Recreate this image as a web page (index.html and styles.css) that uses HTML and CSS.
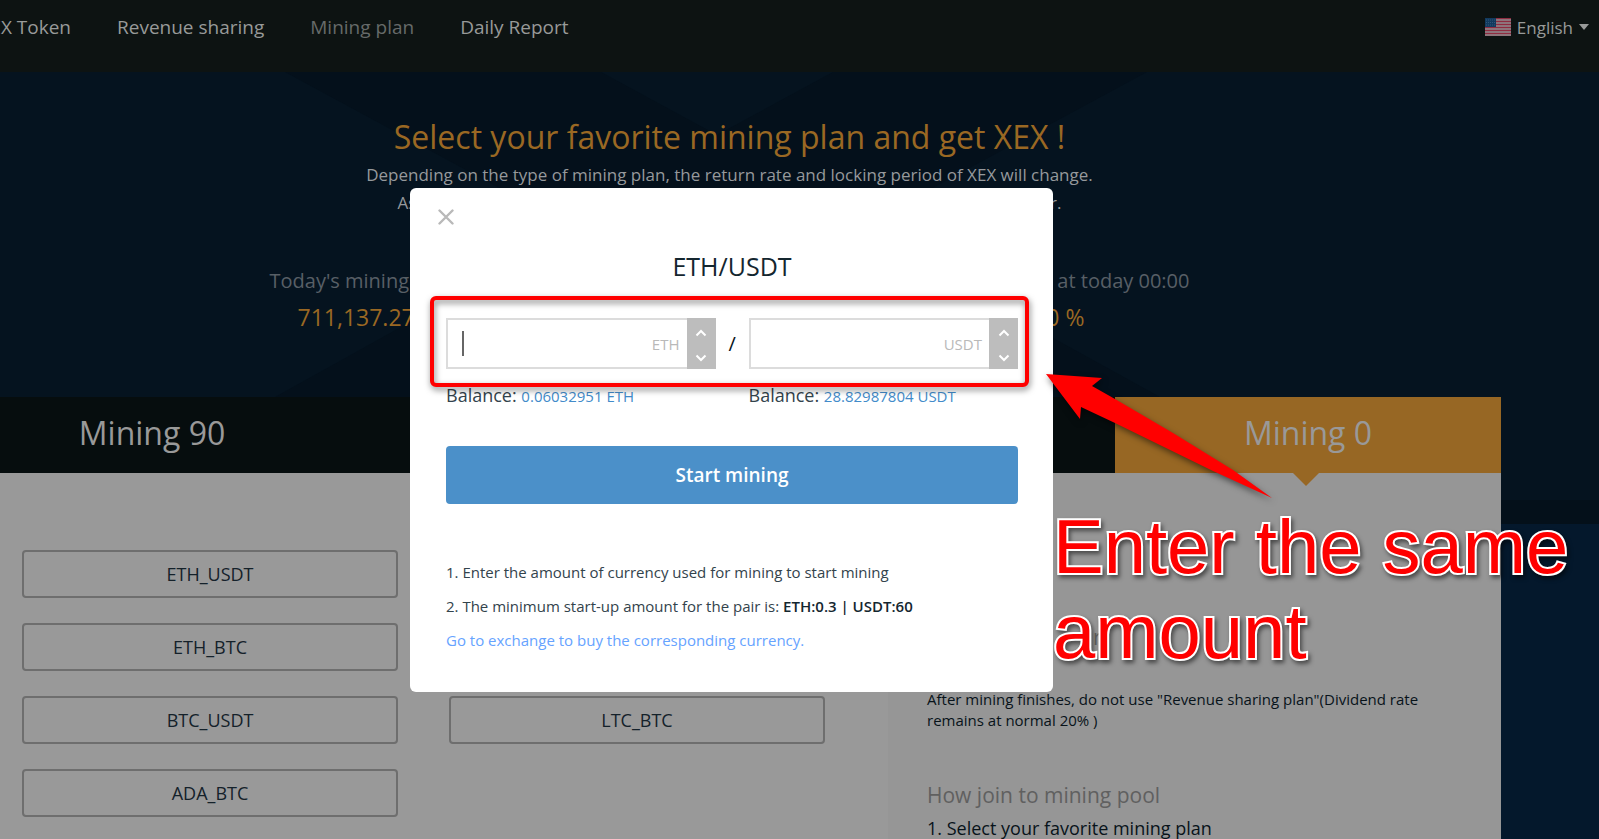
FILE: index.html
```html
<!DOCTYPE html>
<html lang="en">
<head>
<meta charset="utf-8">
<title>Mining plan</title>
<link rel="stylesheet" href="styles.css">
</head>
<body>
<header class="topbar">
  <nav class="nav">
    <a class="nav-link nav-first" href="#">EX Token</a>
    <a class="nav-link" href="#">Revenue sharing</a>
    <a class="nav-link active" href="#">Mining plan</a>
    <a class="nav-link" href="#">Daily Report</a>
  </nav>
  <button class="lang" type="button">
    <svg class="flag" viewBox="0 0 26 18" aria-hidden="true">
      <rect width="26" height="18" fill="#8f2c40"/>
      <path d="M0 2h26M0 5h26M0 8h26M0 11h26M0 14h26M0 17h26" stroke="#8f8c8f" stroke-width="1.3"/>
      <rect width="11" height="9" fill="#123a5e"/>
      <path d="M1 2h9M1 4.500h9M1 7h9" stroke="#31567a" stroke-width="1" stroke-dasharray="1 1"/>
    </svg>
    English
    <span class="caret"></span>
  </button>
</header>

<main>
  <section class="hero">
    <svg class="hero-art" viewBox="0 0 1599 325" preserveAspectRatio="none" aria-hidden="true">
      <path d="M285 0H601L717 63L833 0H1147L716 233ZM275 325L716 80L1160 325Z" fill="#04101b"/>
    </svg>
    <div class="hero-body">
      <h1>Select your favorite mining plan and get XEX !</h1>
      <p class="lead">Depending on the type of mining plan, the return rate and locking period of XEX will change.</p>
      <p class="lead split"><span>As</span><span>r.</span></p>
      <div class="stats">
        <div class="stat">
          <span class="stat-label">Today's mining</span>
          <span class="stat-value">711,137.27</span>
        </div>
        <div class="stat stat-right">
          <span class="stat-label">at today 00:00</span>
          <span class="stat-value">0 %</span>
        </div>
      </div>
    </div>
  </section>

  <section class="plans">
    <div class="tabs">
      <button class="tab" type="button">Mining 90</button>
      <button class="tab tab-active" type="button">Mining 0</button>
    </div>
    <div class="panels">
      <div class="pairs">
        <button class="pair" type="button">ETH_USDT</button>
        <button class="pair" type="button">ETH_BTC</button>
        <button class="pair" type="button">BTC_USDT</button>
        <button class="pair pair-second" type="button">LTC_BTC</button>
        <button class="pair" type="button">ADA_BTC</button>
      </div>
      <aside class="info">
        <h2 class="info-head">r</h2>
        <p class="info-note">After mining finishes, do not use "Revenue sharing plan"(Dividend rate remains at normal 20% )</p>
        <h2 class="info-join">How join to mining pool</h2>
        <p class="info-step">1. Select your favorite mining plan</p>
      </aside>
    </div>
  </section>
</main>

<div class="layer">
  <div class="modal" role="dialog" aria-labelledby="modal-title">
    <button class="close" type="button" aria-label="Close">
      <svg viewBox="0 0 16 16" width="16" height="16"><path d="M1.500 1.500L14.500 14.500M14.500 1.500L1.500 14.500" stroke="#b9b9b9" stroke-width="2.400" stroke-linecap="round"/></svg>
    </button>
    <div class="modal-body">
      <h2 class="modal-title" id="modal-title">ETH/USDT</h2>
      <form class="form">
        <div class="amounts">
          <div class="field">
            <div class="box">
              <span class="cursor"></span>
              <input id="eth" type="text" aria-label="ETH amount">
              <label for="eth">ETH</label>
              <span class="steps">
                <button type="button" aria-label="Increase ETH"><svg viewBox="0 0 12 8"><path d="M1.500 6.500L6 2L10.500 6.500"/></svg></button>
                <button type="button" aria-label="Decrease ETH"><svg viewBox="0 0 12 8"><path d="M1.500 1.500L6 6L10.500 1.500"/></svg></button>
              </span>
            </div>
            <p class="balance">Balance: <a href="#">0.06032951 ETH</a></p>
          </div>
          <span class="slash">/</span>
          <div class="field">
            <div class="box">
              <input id="usdt" type="text" aria-label="USDT amount">
              <label for="usdt">USDT</label>
              <span class="steps">
                <button type="button" aria-label="Increase USDT"><svg viewBox="0 0 12 8"><path d="M1.500 6.500L6 2L10.500 6.500"/></svg></button>
                <button type="button" aria-label="Decrease USDT"><svg viewBox="0 0 12 8"><path d="M1.500 1.500L6 6L10.500 1.500"/></svg></button>
              </span>
            </div>
            <p class="balance">Balance: <a href="#">28.82987804 USDT</a></p>
          </div>
          <span class="highlight"></span>
        </div>
        <button class="start" type="button">Start mining</button>
      </form>
      <div class="notes">
        <p>1. Enter the amount of currency used for mining to start mining</p>
        <p>2. The minimum start-up amount for the pair is: <strong>ETH:0.3 | USDT:60</strong></p>
        <p><a href="#">Go to exchange to buy the corresponding currency.</a></p>
      </div>
    </div>
    <svg class="arrow" viewBox="0 0 228 128" aria-hidden="true">
      <path d="M0 0L56 4L46 12L69 25L127 59L187 96L226 124L167 97L69 49L35 33L34 45Z" fill="#f00"/>
    </svg>
    <p class="callout">Enter the same amount</p>
  </div>
</div>
</body>
</html>
```

FILE: styles.css
```css
* { box-sizing: border-box; }

body {
  margin: 0;
  min-height: 100vh;
  overflow: hidden;
  font-family: "Open Sans", "Noto Sans", sans-serif;
  color: #08131a;
  background: linear-gradient(#05131f 500px, #04101a 500px, #04101a 524px, #04182c 524px);
}

h1, h2, p { margin: 0; font-weight: 400; }
a { color: inherit; text-decoration: none; }
button { font: inherit; color: inherit; border: 0; padding: 0; background: none; }

/* top bar */
.topbar {
  display: flex;
  justify-content: space-between;
  height: 72px;
  padding: 12px 10px 0 0;
  background: #0d1312;
  color: #989a99;
}
.nav { display: flex; gap: 46px; font-size: 19px; line-height: 30px; }
.nav-first { width: 71px; display: flex; justify-content: flex-end; white-space: nowrap; }
.active { color: #666a69; }
.lang {
  display: flex;
  align-items: center;
  gap: 6px;
  height: 30px;
  font-size: 17px;
}
.flag { width: 26px; height: 18px; }
.caret {
  border: 5px solid transparent;
  border-top: 6px solid #989a99;
  border-bottom: 0;
}

/* hero */
.hero { position: relative; height: 325px; background: #05131f; }
.hero-art { position: absolute; inset: 0; width: 100%; height: 100%; }
.hero-body {
  position: relative;
  width: 920px;
  margin: 0 auto;
  left: -70px;
  padding-top: 41px;
  text-align: center;
}
.hero h1 { color: #9a6823; font-size: 32px; line-height: 48px; }
.lead { color: #96999c; font-size: 17px; line-height: 28px; }
.split { display: flex; justify-content: space-between; width: 664px; margin: 0 auto; }
.stats { display: flex; justify-content: space-between; margin-top: 47px; }
.stat { display: flex; flex-direction: column; align-items: flex-start; }
.stat-right { align-items: flex-end; }
.stat-label { color: #585f66; font-size: 20px; line-height: 34px; }
.stat-value { padding-left: 28px; color: #9a6823; font-size: 23px; line-height: 38px; }
.stat-right .stat-value { padding: 0 105px 0 0; }

/* plans */
.plans { margin-right: 98px; }
.tabs { display: flex; justify-content: space-between; background: #060d0e; }
.tab {
  width: 386px;
  height: 76px;
  padding-bottom: 6px;
  color: #999;
  font-size: 32px;
}
.tab:first-child { margin-left: -41px; }
.tab-active { position: relative; background: #976724; }
.tab-active::after {
  content: "";
  position: absolute;
  top: 100%;
  left: 50%;
  margin-left: -15px;
  border: 13px solid transparent;
  border-top-color: #976724;
  border-bottom: 0;
}
.panels { display: flex; min-height: 366px; background: #999; }
.pairs {
  display: grid;
  grid-template-columns: 376px 376px;
  grid-auto-rows: 48px;
  gap: 25px 51px;
  padding: 77px 63px 0 22px;
}
.pair {
  grid-column: 1;
  border: 2px solid #6e6e6e;
  border-radius: 4px;
  color: #14212a;
  font-size: 18px;
}
.pair-second { grid-column: 2; grid-row: 3; }
.info { flex: 1; padding: 147px 60px 0 39px; background: #969696; }
.info h2 { color: #606060; font-size: 21px; line-height: 34px; }
.info-head { padding-left: 166px; }
.info-note { margin-top: 35px; font-size: 15px; line-height: 21px; }
.info-join { margin-top: 47px; }
.info-step { font-size: 18px; line-height: 32px; }

/* modal */
.layer {
  position: absolute;
  inset: 0 136px auto 0;
  display: flex;
  justify-content: center;
  padding-top: 188px;
}
.modal {
  position: relative;
  width: 643px;
  padding: 21px 27px 35px 28px;
  border-radius: 6px;
  background: #fff;
}
.modal-body { padding: 0 8px; }
.close { display: block; width: 16px; height: 16px; }
.close svg { display: block; }
.modal-title { padding-top: 22px; text-align: center; font-size: 25px; line-height: 38px; color: #14262f; }
.amounts { position: relative; display: flex; gap: 13px; margin-top: 33px; }
.field { flex: 1; min-width: 0; }
.box {
  position: relative;
  display: flex;
  align-items: center;
  height: 51px;
  border: 2px solid #dcdcdc;
  border-right: 0;
}
.box input { flex: 1; min-width: 0; align-self: stretch; border: 0; outline: 0; padding: 0 14px; font-size: 18px; }
.box label { padding: 0 7px; color: #b9b9b9; font-size: 15px; }
.cursor { position: absolute; left: 14px; width: 2px; height: 25px; background: #666; }
.steps { display: flex; flex-direction: column; width: 29px; height: 51px; background: #bdbdbd; }
.steps button { flex: 1; }
.steps svg { width: 12px; height: 8px; fill: none; stroke: #fff; stroke-width: 2; }
.slash { width: 7px; font-size: 20px; line-height: 51px; }
.balance { padding-top: 12px; font-size: 18px; line-height: 28px; color: #33434c; white-space: nowrap; }
.balance a { color: #428bca; font-size: 15px; }
.start {
  display: block;
  width: 100%;
  height: 58px;
  margin-top: 36px;
  border-radius: 4px;
  background: #4b90c9;
  color: #fff;
  font-size: 19px;
  font-weight: 600;
}
.notes { margin-top: 51px; font-size: 15px; line-height: 34px; color: #33434c; }
.notes strong { font-weight: 600; color: #14262f; }
.notes a { color: #66a3ff; }

/* annotations */
.highlight {
  position: absolute;
  inset: -22px -11px auto -16px;
  height: 91px;
  border: 4px solid #f00;
  border-radius: 6px;
  filter: drop-shadow(1px 3px 3px rgba(0, 0, 0, .5));
  pointer-events: none;
}
.arrow {
  position: absolute;
  left: 636px;
  top: 186px;
  width: 228px;
  height: 128px;
  overflow: visible;
  filter: drop-shadow(1px 3px 3px rgba(0, 0, 0, .5));
}
.callout {
  position: absolute;
  left: 643px;
  top: 316px;
  width: 540px;
  color: #f00;
  font-family: "Liberation Sans", Arial, sans-serif;
  font-size: 76px;
  line-height: 85px;
  -webkit-text-stroke: 4px #fff;
  paint-order: stroke fill;
  filter: drop-shadow(2px 3px 2px rgba(0, 0, 0, .5));
}
```
